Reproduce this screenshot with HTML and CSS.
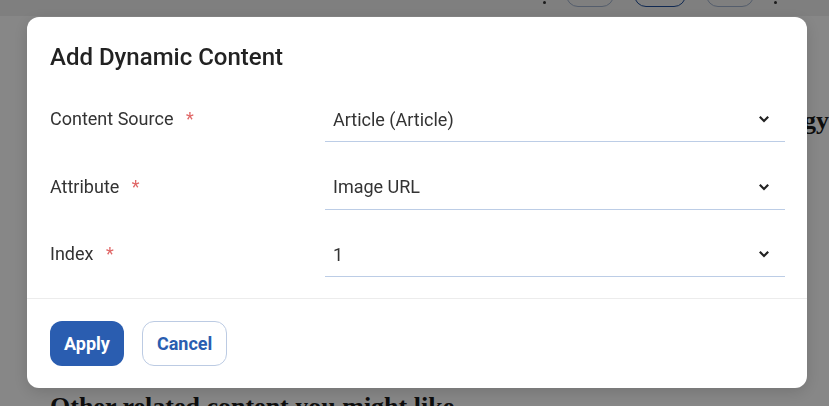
FILE: index.html
```html
<!DOCTYPE html>
<html>
<head>
  <title>Add Dynamic Content</title>
  <meta name="viewport" content="width=device-width, initial-scale=1.0">
  <link rel="stylesheet" href="styles.css">
</head>
<body>
  <!-- Halaman di belakang modal -->
  <div class="topbar">
    <span class="titik"></span>
    <span class="tombol-kecil"></span>
    <span class="tombol-kecil aktif"></span>
    <span class="tombol-kecil"></span>
    <span class="titik"></span>
  </div>
  <div class="artikel">
    <h2 class="artikel-judul">A Practical Guide to Your Email Marketing Strategy</h2>
    <h2 class="artikel-bawah">Other related content you might like</h2>
  </div>

  <!-- Lapisan gelap + modal -->
  <div class="overlay">
    <div class="modal">
      <div class="modal-judul">Add Dynamic Content</div>
      <div class="modal-isi">
        <div class="baris">
          <label class="label">Content Source <span class="wajib">*</span></label>
          <div class="pilihan">
            <span>Article (Article)</span>
            <svg class="panah" width="12" height="8" viewBox="0 0 12 8"><path d="M1.8 1.8 L6 6 L10.2 1.8" fill="none" stroke="#222" stroke-width="2.2"/></svg>
          </div>
        </div>
        <div class="baris">
          <label class="label">Attribute <span class="wajib">*</span></label>
          <div class="pilihan">
            <span>Image URL</span>
            <svg class="panah" width="12" height="8" viewBox="0 0 12 8"><path d="M1.8 1.8 L6 6 L10.2 1.8" fill="none" stroke="#222" stroke-width="2.2"/></svg>
          </div>
        </div>
        <div class="baris">
          <label class="label">Index <span class="wajib">*</span></label>
          <div class="pilihan">
            <span>1</span>
            <svg class="panah" width="12" height="8" viewBox="0 0 12 8"><path d="M1.8 1.8 L6 6 L10.2 1.8" fill="none" stroke="#222" stroke-width="2.2"/></svg>
          </div>
        </div>
      </div>
      <div class="modal-kaki">
        <button class="btn btn-utama">Apply</button>
        <button class="btn btn-garis">Cancel</button>
      </div>
    </div>
  </div>
</body>
</html>
```

FILE: styles.css
```css
body {
  margin: 0;
  padding: 0;
  height: 100vh;
  overflow: hidden;
  background: #fff;
  font-family: Roboto, "Liberation Sans", sans-serif;
}
.topbar {
  height: 16px;
  background: #f0f0f0;
  display: flex;
  align-items: flex-end;
  gap: 20px;
  padding-left: 543px;
  overflow: hidden;
}
.titik {
  width: 3px;
  height: 3px;
  background: #333;
  border-radius: 50%;
  margin-bottom: 12px;
}
.tombol-kecil {
  width: 46px;
  height: 30px;
  border: 1px solid #9fb0cc;
  border-radius: 12px;
  margin-bottom: 9px;
}
.tombol-kecil.aktif {
  border-color: #1f4f9c;
  width: 50px;
}
.artikel {
  padding: 0 0 0 50px;
}
.artikel-judul {
  font-family: "Liberation Serif", serif;
  font-size: 26px;
  color: #1a1a1a;
  white-space: nowrap;
  text-align: right;
  margin: 90px 0 0 0;
}
.artikel-bawah {
  font-family: "Liberation Serif", serif;
  font-size: 26px;
  color: #1a1a1a;
  white-space: nowrap;
  margin: 256px 0 0 0;
}
.overlay {
  position: fixed;
  inset: 0;
  background: rgba(0, 0, 0, 0.47);
  padding: 17px 0 0 27px;
}
.modal {
  width: 780px;
  height: 371px;
  background: #fff;
  border-radius: 12px;
  box-shadow: 0 4px 16px rgba(0, 0, 0, 0.15);
  display: flex;
  flex-direction: column;
}
.modal-judul {
  font-size: 24px;
  font-weight: 500;
  color: #222;
  padding: 26px 23px 0;
  line-height: 28px;
}
.modal-isi {
  padding: 14px 22px 10px 23px;
  border-bottom: 1px solid #ececec;
}
.baris {
  display: grid;
  grid-template-columns: 275px 1fr;
  align-items: center;
  height: 67.5px;
}
.label {
  font-size: 18px;
  color: #333;
}
.wajib {
  color: #e06666;
  margin-left: 8px;
}
.pilihan {
  display: flex;
  justify-content: space-between;
  align-items: center;
  font-size: 18px;
  color: #333;
  padding: 0 15px 0 8px;
  height: 44px;
  border-bottom: 1px solid #bccde6;
  margin-top: 2px;
}
.modal-kaki {
  display: flex;
  gap: 18px;
  padding: 22px 23px;
}
.btn {
  font-family: Roboto, "Liberation Sans", sans-serif;
  font-size: 18px;
  font-weight: 700;
  height: 45px;
  border-radius: 12px;
  padding: 0 14px;
  cursor: pointer;
}
.btn-utama {
  background: #2a5db0;
  color: #fff;
  border: none;
}
.btn-garis {
  background: #fff;
  color: #2a5db0;
  border: 1px solid #bccbe3;
}
```
